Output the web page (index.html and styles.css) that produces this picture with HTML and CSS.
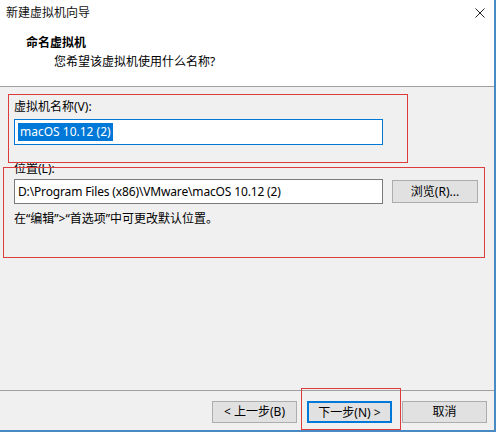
FILE: index.html
```html
<!DOCTYPE html>
<html lang="zh-CN">
<head>
    <meta charset="UTF-8">
    <title>新建虚拟机向导</title>
    <link rel="stylesheet" href="styles.css">
</head>
<body>
    <div class="window">
        <div class="top">
            <div class="titlebar">
                <span class="title">新建虚拟机向导</span>
                <svg class="close" width="10" height="10" viewBox="0 0 10 10">
                    <path d="M0.5 0.5 L9.5 9.5 M9.5 0.5 L0.5 9.5" stroke="#222" stroke-width="1" fill="none"/>
                </svg>
            </div>
            <div class="heading">命名虚拟机</div>
            <div class="subheading">您希望该虚拟机使用什么名称?</div>
        </div>

        <div class="content">
            <div class="field-label">虚拟机名称(V):</div>
            <div class="name-input"><span class="selected">macOS 10.12 (2)</span></div>

            <div class="field-label location-label">位置(L):</div>
            <div class="path-row">
                <div class="path-input">D:\Program Files (x86)\VMware\macOS 10.12 (2)</div>
                <button class="btn browse">浏览(R)...</button>
            </div>
            <div class="note">在“编辑”&gt;“首选项”中可更改默认位置。</div>
        </div>

        <div class="footer">
            <button class="btn">&lt; 上一步(B)</button>
            <button class="btn focused">下一步(N) &gt;</button>
            <button class="btn">取消</button>
        </div>

        <!-- 标注框 -->
        <div class="mark mark-name"></div>
        <div class="mark mark-location"></div>
        <div class="mark mark-next"></div>
    </div>
</body>
</html>
```

FILE: styles.css
```css
* {
    box-sizing: border-box;
}
body {
    margin: 0;
    font-family: "Noto Sans", "Noto Sans CJK SC", sans-serif;
    font-size: 12px;
    color: #000;
    background: #fff;
}
.window {
    position: relative;
    width: 496px;
    height: 432px;
    background: #f0f0f0;
    border-right: 2px solid #4a8ac4;
    border-bottom: 2px solid #4a8ac4;
    overflow: hidden;
}
.top {
    height: 87px;
    background: #fff;
    border-bottom: 1px solid #a0a0a0;
}
.titlebar {
    height: 26px;
    display: flex;
    align-items: center;
    justify-content: space-between;
    padding: 0 9px 0 6px;
}
.title {
    line-height: 26px;
    color: #111;
}
.heading {
    margin-top: 9px;
    padding-left: 26px;
    font-weight: bold;
    line-height: 16px;
}
.subheading {
    margin-top: 3px;
    padding-left: 54px;
    line-height: 16px;
}
.content {
    height: 303px;
    padding: 12px 0 0 14px;
}
.field-label {
    line-height: 16px;
}
.name-input {
    margin-top: 4px;
    width: 369px;
    height: 26px;
    background: #fff;
    border: 1px solid #0078d7;
    padding: 3px 0 0 3px;
}
.selected {
    display: inline-block;
    background: #0078d7;
    color: #fff;
    line-height: 18px;
    padding: 0 2px;
}
.location-label {
    margin-top: 16px;
}
.path-row {
    margin-top: 2px;
    display: flex;
    align-items: flex-start;
    gap: 9px;
}
.path-input {
    width: 369px;
    height: 25px;
    background: #fff;
    border: 1px solid #7a7a7a;
    padding-left: 3px;
    line-height: 23px;
    letter-spacing: -0.15px;
}
.btn {
    font-family: inherit;
    font-size: 12px;
    color: #000;
    width: 85px;
    height: 22px;
    background: #e1e1e1;
    border: 1px solid #adadad;
    padding: 0;
    line-height: 20px;
}
.browse {
    margin-top: 1px;
    width: 86px;
    height: 23px;
}
.note {
    margin-top: 7px;
    line-height: 16px;
}
.footer {
    height: 41px;
    border-top: 1px solid #a0a0a0;
    display: flex;
    justify-content: flex-end;
    gap: 10px;
    padding: 10px 7px 0 0;
}
.focused {
    border: 2px solid #0078d7;
}
.mark {
    position: absolute;
    border: 1px solid #dc3c3c;
}
.mark-name {
    left: 8px;
    top: 94px;
    width: 400px;
    height: 69px;
}
.mark-location {
    left: 3px;
    top: 167px;
    width: 482px;
    height: 91px;
}
.mark-next {
    left: 301px;
    top: 388px;
    width: 100px;
    height: 42px;
}
```
